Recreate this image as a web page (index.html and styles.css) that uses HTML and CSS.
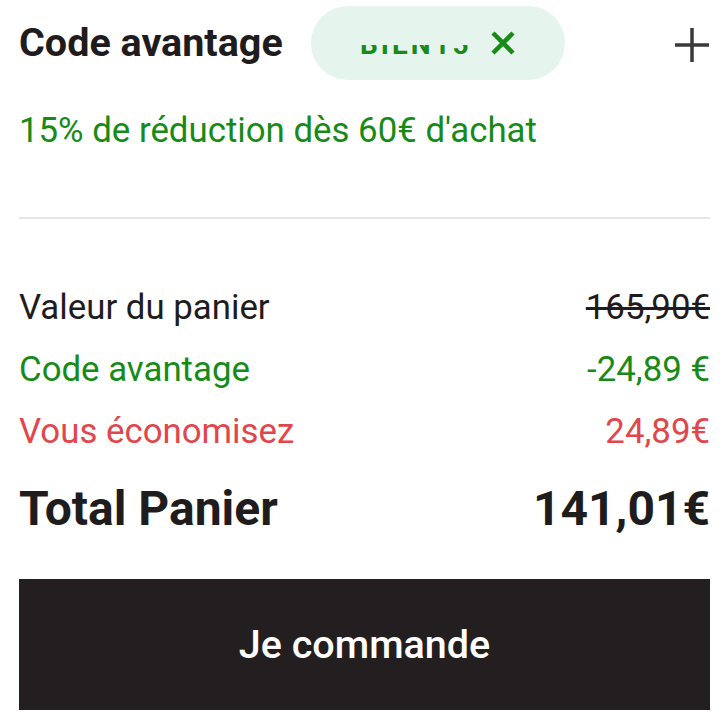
FILE: index.html
```html
<!DOCTYPE html>
<html lang="fr">
<head>
  <meta charset="UTF-8">
  <meta name="viewport" content="width=device-width, initial-scale=1.0">
  <title>Panier</title>
  <link rel="stylesheet" href="styles.css">
</head>
<body>
  <div class="cart-summary">
    <div class="promo-header">
      <h2 class="promo-title">Code avantage</h2>
      <div class="promo-chip">
        <span class="chip-code"><span>BIEN15</span></span>
        <svg class="chip-remove" width="26" height="24" viewBox="0 0 26 24" aria-label="Retirer">
          <path d="M3 2 L23 22 M23 2 L3 22" stroke="#178a17" stroke-width="4.5" fill="none"/>
        </svg>
      </div>
      <svg class="promo-add" width="36" height="36" viewBox="0 0 36 36" aria-label="Ajouter">
        <path d="M18 1 V35 M1 18 H35" stroke="#3a3a3a" stroke-width="3.5" fill="none"/>
      </svg>
    </div>
    <p class="promo-note">15% de réduction dès 60€ d'achat</p>

    <hr class="divider">

    <div class="summary-lines">
      <div class="summary-row">
        <span>Valeur du panier</span>
        <span class="old-price">165,90€</span>
      </div>
      <div class="summary-row discount">
        <span>Code avantage</span>
        <span>-24,89 €</span>
      </div>
      <div class="summary-row savings">
        <span>Vous économisez</span>
        <span>24,89€</span>
      </div>
    </div>
    <div class="summary-row total">
      <span>Total Panier</span>
      <span>141,01€</span>
    </div>

    <button type="button" class="order-btn">Je commande</button>
  </div>
</body>
</html>
```

FILE: styles.css
```css
body {
  margin: 0;
  padding: 0;
  font-family: Roboto, "Liberation Sans", sans-serif;
  color: #1f1c1d;
  background: #fff;
}
.cart-summary {
  padding: 6px 15px 0 19px;
}
.promo-header {
  display: flex;
  align-items: center;
  height: 74px;
}
.promo-title {
  margin: 0;
  font-size: 39.5px;
  font-weight: 700;
  line-height: 1;
}
.promo-chip {
  display: flex;
  align-items: center;
  justify-content: center;
  gap: 18px;
  width: 254px;
  height: 74px;
  margin-left: 28px;
  border-radius: 37px;
  background-color: #e5f4ec;
}
.chip-code {
  display: block;
  height: 12px;
  margin-top: 15px;
  overflow: hidden;
}
.chip-code span {
  display: block;
  margin-top: -14px;
  font-size: 28px;
  line-height: 28px;
  font-weight: 700;
  letter-spacing: 3px;
  color: #178a17;
}
.chip-remove {
  display: block;
}
.promo-add {
  margin-left: auto;
  margin-top: 4px;
}
.promo-note {
  margin: 31px 0 0;
  font-size: 34.8px;
  line-height: 38px;
  color: #178a17;
}
.divider {
  margin: 68px 0 0;
  border: none;
  border-top: 2px solid #e6e6e6;
}
.summary-lines {
  margin-top: 57px;
}
.summary-row {
  display: flex;
  justify-content: space-between;
  font-size: 34.8px;
  line-height: 62px;
}
.old-price {
  text-decoration: line-through;
}
.discount {
  color: #178a17;
}
.savings {
  color: #e0464b;
}
.total {
  margin-top: 17px;
  font-size: 48px;
  font-weight: 700;
  line-height: 60px;
}
.order-btn {
  display: block;
  width: 100%;
  height: 131px;
  margin-top: 40px;
  border: none;
  background-color: #231f20;
  color: #fff;
  font-family: Roboto, "Liberation Sans", sans-serif;
  font-size: 39.5px;
  font-weight: 500;
  cursor: pointer;
}
```
